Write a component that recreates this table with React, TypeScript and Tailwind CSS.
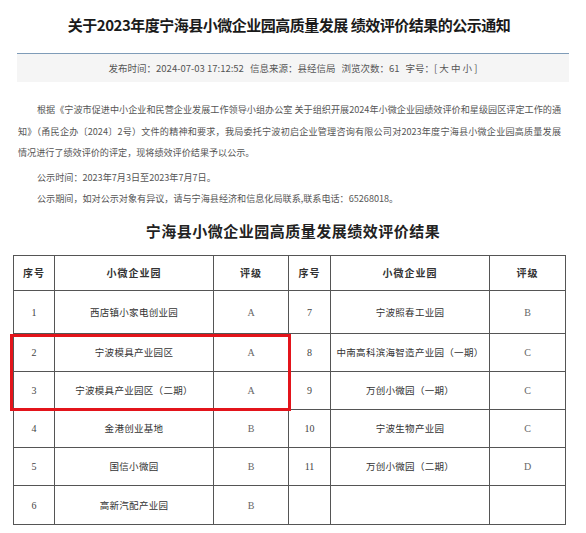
import React from "react";

const sans = { fontFamily: '"Noto Sans CJK SC", "Noto Sans", sans-serif' };

type Row = { no: string; name: string; grade: string };
const left: Row[] = [
  { no: "1", name: "西店镇小家电创业园", grade: "A" },
  { no: "2", name: "宁波模具产业园区", grade: "A" },
  { no: "3", name: "宁波模具产业园区（二期）", grade: "A" },
  { no: "4", name: "金港创业基地", grade: "B" },
  { no: "5", name: "国信小微园", grade: "B" },
  { no: "6", name: "高新汽配产业园", grade: "B" },
];
const right: Row[] = [
  { no: "7", name: "宁波照春工业园", grade: "B" },
  { no: "8", name: "中南高科滨海智造产业园（一期）", grade: "C" },
  { no: "9", name: "万创小微园（一期）", grade: "C" },
  { no: "10", name: "宁波生物产业园", grade: "C" },
  { no: "11", name: "万创小微园（二期）", grade: "D" },
  { no: "", name: "", grade: "" },
];
const heights = ["h-[43px]", "h-[38px]", "h-[38px]", "h-[38px]", "h-[38px]", "h-[39px]"];

function NumCell({ v }: { v: string }) {
  return (
    <td className="border border-[#555] text-center text-[10px] text-[#444] font-['Liberation_Serif','Noto_Sans_CJK_SC',serif]">
      {v}
    </td>
  );
}
function NameCell({ v }: { v: string }) {
  return (
    <td className="border border-[#555] text-center whitespace-nowrap text-[9.5px] text-[#333] tracking-[0.3px] font-['Noto_Sans_CJK_SC',sans-serif]">
      {v}
    </td>
  );
}
function GradeCell({ v }: { v: string }) {
  return (
    <td className="border border-[#555] text-center text-[10px] text-[#666] font-['Liberation_Serif','Noto_Sans_CJK_SC',serif]">
      {v}
    </td>
  );
}
function Head({ v }: { v: string }) {
  return (
    <th className="border border-[#555] text-center text-[10px] font-bold text-[#333] tracking-[1px] font-['Liberation_Serif','Noto_Sans_CJK_SC',serif]">
      {v}
    </th>
  );
}

export default function App() {
  return (
    <div className="relative w-[586px] h-[533px] bg-white overflow-hidden" style={sans}>
      <div className="h-[53px] flex items-center justify-center pb-[2px] pr-[8px]">
        <h1 className="text-[15px] font-bold text-[#1a1a1a] tracking-[-0.5px] whitespace-nowrap">
          关于2023年度宁海县小微企业园高质量发展 绩效评价结果的公示通知
        </h1>
      </div>
      <div className="mx-[17px] h-[29px] border-t border-[#7f9cb8] bg-[#f5f5f5] flex items-center justify-center text-[9.5px] text-[#555] gap-[6px] whitespace-nowrap">
        <span>发布时间：2024-07-03 17:12:52</span>
        <span>信息来源：县经信局</span>
        <span>浏览次数：61</span>
        <span>字号：[ 大 中 小 ]</span>
      </div>
      <div className="mt-[17px] ml-[18px] mr-[25px] text-[9.1px] leading-[21.5px] text-[#555]">
        <p className="pl-[19px] text-justify [text-align-last:justify] whitespace-nowrap">
          根据《宁波市促进中小企业和民营企业发展工作领导小组办公室 关于组织开展2024年小微企业园绩效评价和星级园区评定工作的通
        </p>
        <p className="text-justify [text-align-last:justify] whitespace-nowrap">
          知》（甬民企办〔2024〕2号）文件的精神和要求，我局委托宁波初启企业管理咨询有限公司对2023年度宁海县小微企业园高质量发展
        </p>
        <p className="whitespace-nowrap">情况进行了绩效评价的评定，现将绩效评价结果予以公示。</p>
        <p className="pl-[19px] mt-[3px] whitespace-nowrap">公示时间：2023年7月3日至2023年7月7日。</p>
        <p className="pl-[19px] whitespace-nowrap">公示期间，如对公示对象有异议，请与宁海县经济和信息化局联系,联系电话：65268018。</p>
      </div>
      <div className="mt-[11px] text-center text-[15px] font-bold text-[#222] tracking-[0.5px] font-['Liberation_Serif','Noto_Sans_CJK_SC',serif]">
        宁海县小微企业园高质量发展绩效评价结果
      </div>
      <table className="ml-[13px] mt-[12px] border-collapse table-fixed w-[552px]">
        <colgroup>
          <col className="w-[41px]" />
          <col className="w-[159px]" />
          <col className="w-[75px]" />
          <col className="w-[42px]" />
          <col className="w-[159px]" />
          <col className="w-[76px]" />
        </colgroup>
        <thead>
          <tr className="h-[35px]">
            <Head v="序号" />
            <Head v="小微企业园" />
            <Head v="评级" />
            <Head v="序号" />
            <Head v="小微企业园" />
            <Head v="评级" />
          </tr>
        </thead>
        <tbody>
          {left.map((l, i) => {
            const r = right[i];
            return (
              <tr key={i} className={heights[i]}>
                <NumCell v={l.no} />
                <NameCell v={l.name} />
                <GradeCell v={l.grade} />
                <NumCell v={r.no} />
                <NameCell v={r.name} />
                <GradeCell v={r.grade} />
              </tr>
            );
          })}
        </tbody>
      </table>
      <div className="absolute left-[10px] top-[334px] w-[281px] h-[77px] border-[3px] border-[#e3141b]" />
    </div>
  );
}
